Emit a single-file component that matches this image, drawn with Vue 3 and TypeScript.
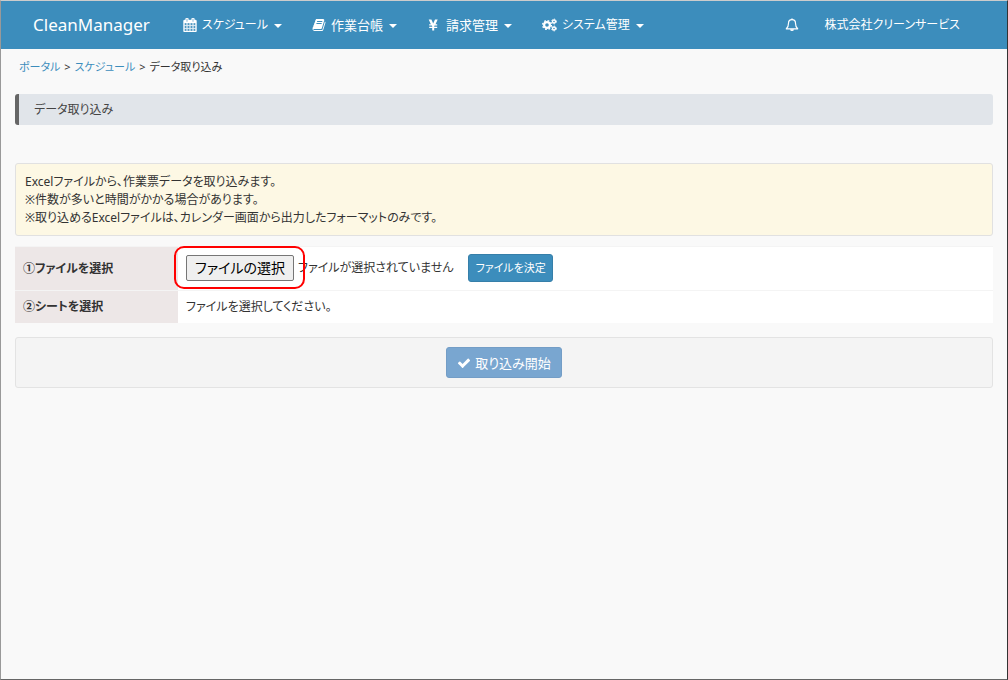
<script setup lang="ts">
import { ref } from 'vue'

interface MenuItem {
  icon: 'calendar' | 'book' | 'yen' | 'gears'
  label: string
  compact: boolean
}

const menu: MenuItem[] = [
  { icon: 'calendar', label: 'スケジュール', compact: true },
  { icon: 'book', label: '作業台帳', compact: false },
  { icon: 'yen', label: '請求管理', compact: false },
  { icon: 'gears', label: 'システム管理', compact: true },
]

const notes: string[] = [
  'Excelファイルから、作業票データを取り込みます。',
  '※件数が多いと時間がかかる場合があります。',
  '※取り込めるExcelファイルは、カレンダー画面から出力したフォーマットのみです。',
]

const fileInput = ref<HTMLInputElement | null>(null)
const fileName = ref('ファイルが選択されていません')

function onFileChange(event: Event): void {
  const files = (event.target as HTMLInputElement).files
  fileName.value = files && files.length > 0 ? files[0].name : 'ファイルが選択されていません'
}
</script>

<template>
  <div class="page">
    <header class="topbar">
      <a class="brand" href="#">CleanManager</a>
      <nav class="menu">
        <button
          v-for="item in menu"
          :key="item.label"
          type="button"
          class="menu-item"
          :class="{ compact: item.compact }"
        >
          <svg v-if="item.icon === 'calendar'" class="icon icon-calendar" viewBox="0 0 1792 1792" aria-hidden="true">
            <path d="M192 1664h288v-288h-288v288zm352 0h320v-288h-320v288zm-352-352h288v-320h-288v320zm352 0h320v-320h-320v320zm-352-384h288v-288h-288v288zm736 736h320v-288h-320v288zm-384-736h320v-288h-320v288zm768 736h288v-288h-288v288zm-384-352h320v-320h-320v320zm-352-864v-288q0-13-9.500-22.500t-22.500-9.500h-64q-13 0-22.500 9.500t-9.500 22.500v288q0 13 9.500 22.500t22.500 9.500h64q13 0 22.500-9.500t9.500-22.500zm736 864h288v-320h-288v320zm-384-384h320v-288h-320v288zm384 0h288v-288h-288v288zm32-480v-288q0-13-9.500-22.500t-22.500-9.500h-64q-13 0-22.500 9.500t-9.500 22.500v288q0 13 9.500 22.500t22.500 9.500h64q13 0 22.500-9.500t9.500-22.500zm384-64v1280q0 52-38 90t-90 38h-1408q-52 0-90-38t-38-90v-1280q0-52 38-90t90-38h128v-96q0-66 47-113t113-47h64q66 0 113 47t47 113v96h384v-96q0-66 47-113t113-47h64q66 0 113 47t47 113v96h128q52 0 90 38t38 90z" />
          </svg>
          <svg v-else-if="item.icon === 'book'" class="icon" viewBox="0 0 1792 1792" aria-hidden="true">
            <path d="M1703 478q40 57 18 129l-275 906q-19 64-76.500 107.500t-122.500 43.500h-923q-77 0-148.500-53.500t-99.500-131.500q-24-67-2-127 0-4 3-27t4-37q1-8-3-21.500t-3-19.500q2-11 8-21t16.500-23.500 16.500-23.500q23-38 45-91.500t30-91.500q3-10 .5-30t-.5-28q3-11 17-28t17-23q21-36 42-92t25-90q1-9-2.500-32t.5-28q4-13 22-30.500t22-22.500q19-26 42.500-84.500t27.500-96.500q1-8-3-25.500t-2-26.500q2-8 9-18t18-23 17-21q8-12 16.500-30.500t15-35 16-36 19.500-32 26.500-23.500 36-11.500 47.500 5.500l-1 3q38-9 51-9h761q74 0 114 56t18 130l-274 906q-36 119-71.500 153.500t-128.500 34.500h-869q-27 0-38 15-11 16-1 43 24 70 144 70h923q29 0 56-15.500t35-41.500l300-987q7-22 5-57 38 15 59 43zm-1064 2q-4 13 2 22.500t20 9.500h608q13 0 25.500-9.500t16.500-22.500l21-64q4-13-2-22.500t-20-9.500h-608q-13 0-25.500 9.500t-16.500 22.500zm-83 256q-4 13 2 22.500t20 9.500h608q13 0 25.500-9.500t16.500-22.500l21-64q4-13-2-22.500t-20-9.500h-608q-13 0-25.500 9.500t-16.500 22.500z" />
          </svg>
          <svg v-else-if="item.icon === 'yen'" class="icon" viewBox="0 0 14 14" aria-hidden="true">
            <path d="M1.700 1.500h2.700L6.200 5.500l1.800-4h2.700L8.500 6.200h1.700v1.200H7.600l-.4.900v.4h3V10h-3v2.500h-2V10h-3V8.700h3v-.4l-.4-.9H2.200V6.200h1.700z" />
          </svg>
          <svg v-else class="icon icon-gears" viewBox="0 0 15 14" aria-hidden="true">
            <g fill="none" stroke="currentColor">
              <circle cx="5" cy="7" r="2.900" stroke-width="2.200" />
              <circle cx="5" cy="7" r="4.400" stroke-width="1.400" stroke-dasharray="1.730 1.726" />
              <circle cx="12" cy="3.500" r="1.500" stroke-width="1.400" />
              <circle cx="12" cy="3.500" r="2.400" stroke-width="1" stroke-dasharray="1.250 1.263" />
              <circle cx="12" cy="10.500" r="1.500" stroke-width="1.400" />
              <circle cx="12" cy="10.500" r="2.400" stroke-width="1" stroke-dasharray="1.250 1.263" />
            </g>
          </svg>
          <span>{{ item.label }}</span>
          <i class="caret" aria-hidden="true"></i>
        </button>
      </nav>
      <button type="button" class="bell" aria-label="通知">
        <svg class="icon" viewBox="0 0 14 14" aria-hidden="true">
          <path d="M7 1.700c-2.300 0-3.500 1.600-3.500 3.600 0 2.900-.7 4.400-2.200 5.500h11.400c-1.500-1.100-2.200-2.600-2.200-5.500 0-2-1.200-3.600-3.500-3.600z" fill="none" stroke="currentColor" stroke-width="1.200" stroke-linejoin="round" />
          <path d="M6.300.4h1.400v1.400H6.300zM5.100 11.200h3.800a1.900 1.900 0 0 1-3.800 0z" />
        </svg>
      </button>
      <a class="company" href="#">株式会社クリーンサービス</a>
    </header>

    <nav class="breadcrumb" aria-label="現在位置">
      <a href="#">ポータル</a><span>&gt;</span><a href="#">スケジュール</a><span>&gt;</span><span>データ取り込み</span>
    </nav>

    <main class="content">
      <h1 class="heading">データ取り込み</h1>

      <div class="notice">
        <p v-for="note in notes" :key="note">{{ note }}</p>
      </div>

      <table class="form">
        <tbody>
          <tr>
            <th scope="row"><label for="file">①ファイルを選択</label></th>
            <td>
              <div class="file-row">
                <div class="picker">
                  <button type="button" class="choose" @click="fileInput?.click()">ファイルの選択</button>
                  <span class="ring" aria-hidden="true"></span>
                </div>
                <input id="file" ref="fileInput" class="file-input" type="file" accept=".xlsx,.xls" tabindex="-1" @change="onFileChange" />
                <span class="file-name">{{ fileName }}</span>
                <button type="button" class="decide">ファイルを決定</button>
              </div>
            </td>
          </tr>
          <tr>
            <th scope="row">②シートを選択</th>
            <td>ファイルを選択してください。</td>
          </tr>
        </tbody>
      </table>

      <div class="actions">
        <button type="button" class="start" disabled>
          <svg class="icon" viewBox="0 0 1792 1792" aria-hidden="true">
            <path d="M1671 566q0 40-28 68l-724 724-136 136q-28 28-68 28t-68-28l-136-136-362-362q-28-28-28-68t28-68l136-136q28-28 68-28t68 28l294 295 656-657q28-28 68-28t68 28l136 136q28 28 28 68z" />
          </svg>
          <span>取り込み開始</span>
        </button>
      </div>
    </main>
  </div>
</template>

<style>
body {
  margin: 0;
  background: #f9f9f9;
}
</style>

<style scoped>
* {
  box-sizing: border-box;
}

.page {
  min-height: 100vh;
  border: 1px solid #999;
  border-top-color: #ccc;
  border-right-color: #333;
  border-bottom-color: #666;
  background: #f9f9f9;
  color: #333;
  font-family: "Noto Sans", "Noto Sans CJK JP", sans-serif;
  font-size: 12px;
  line-height: 18px;
  font-feature-settings: "palt";
}

button {
  font: inherit;
  font-feature-settings: inherit;
  color: inherit;
  cursor: pointer;
}

a {
  color: #3c8dbc;
  text-decoration: none;
}

.icon {
  flex: none;
  width: 14px;
  height: 14px;
  fill: currentColor;
}

.topbar {
  display: flex;
  align-items: center;
  height: 48px;
  padding: 0 32px;
  background: #3c8dbc;
  color: #fff;
}

.brand {
  margin-right: 18px;
  color: #fff;
  font-size: 17px;
  line-height: 48px;
}

.menu {
  display: flex;
  flex: 1;
}

.menu-item {
  display: flex;
  align-items: center;
  gap: 5px;
  height: 48px;
  padding: 0 15px;
  border: 0;
  background: none;
  font-size: 13px;
  white-space: nowrap;
}

.menu-item.compact {
  font-size: 12px;
}

.icon-calendar {
  stroke: currentColor;
  stroke-width: 50;
}

.icon-gears {
  width: 15px;
}

.caret {
  margin: 2px 0 0 1px;
  border: 4px solid transparent;
  border-top-color: #fff;
  border-bottom: 0;
}

.bell {
  display: flex;
  padding: 15px 14px;
  border: 0;
  background: none;
}

.company {
  padding: 15px 15px 15px 12px;
  color: #fff;
}

.breadcrumb {
  display: flex;
  gap: 4px;
  padding: 9px 18px;
  font-size: 11px;
}

.content {
  padding: 9px 14px;
}

.heading {
  margin: 0 0 38px;
  padding: 7px 15px 6px;
  border-left: 4px solid #666;
  border-radius: 3px;
  background: #e1e5ea;
  font-size: 12px;
  font-weight: 400;
  line-height: 18px;
  color: #444;
}

.notice {
  margin-bottom: 10px;
  padding: 9px 9px 8px;
  border: 1px solid #e1e1e1;
  border-radius: 3px;
  background: #fdf8e4;
}

.notice p {
  margin: 0;
}

.form {
  width: 100%;
  border-collapse: collapse;
  background: #fff;
}

.form th,
.form td {
  padding: 7px 8px;
  border-top: 1px solid #f4f4f4;
  text-align: left;
}

.form th {
  width: 163px;
  background: #ede7e7;
  font-weight: 700;
}

.file-row {
  display: flex;
  align-items: center;
  padding-bottom: 1px;
}

.picker {
  position: relative;
}

.choose {
  display: block;
  height: 26px;
  padding: 0 8px;
  border: 1px solid #767676;
  border-radius: 2px;
  background: #efefef;
  color: #000;
  font-size: 14px;
}

.ring {
  position: absolute;
  inset: -9px -11px -8px -12px;
  border: 2px solid #f00;
  border-radius: 10px;
  pointer-events: none;
}

.file-input {
  width: 1px;
  height: 1px;
  opacity: 0;
}

.file-name {
  margin: 0 15px 0 3px;
}

.decide {
  height: 28px;
  padding: 0 6px;
  border: 1px solid #367fa9;
  border-radius: 3px;
  background: #3c8dbc;
  color: #fff;
  font-size: 11px;
}

.actions {
  display: flex;
  justify-content: center;
  margin-top: 14px;
  padding: 9px;
  border: 1px solid #e3e3e3;
  border-radius: 3px;
  background: #f4f4f4;
}

.start {
  display: flex;
  align-items: center;
  gap: 4px;
  height: 31px;
  padding: 0 10px;
  border: 1px solid #739dc6;
  border-radius: 3px;
  background: #79a6d0;
  color: #fff;
  font-size: 13px;
  cursor: default;
}
</style>
